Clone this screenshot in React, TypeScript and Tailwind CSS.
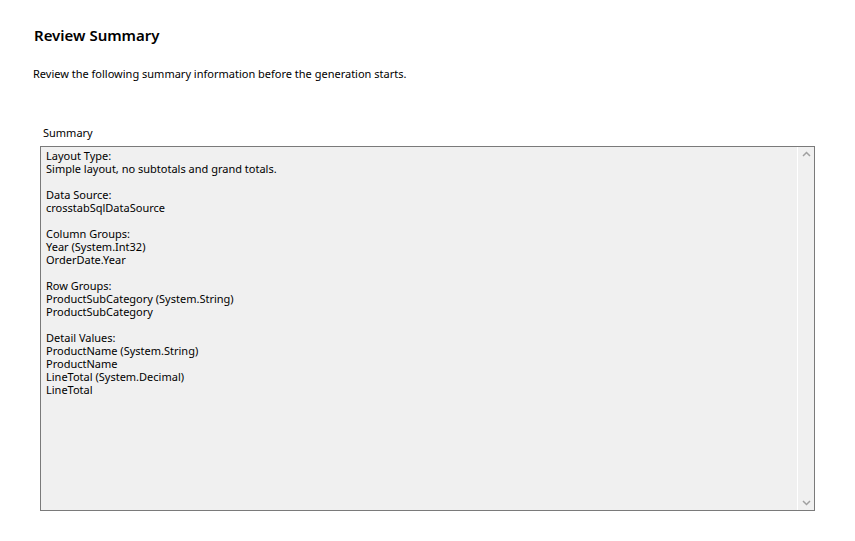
export default function App() {
  const lines = [
    'Layout Type:',
    'Simple layout, no subtotals and grand totals.',
    '',
    'Data Source:',
    'crosstabSqlDataSource',
    '',
    'Column Groups:',
    'Year (System.Int32)',
    'OrderDate.Year',
    '',
    'Row Groups:',
    'ProductSubCategory (System.String)',
    'ProductSubCategory',
    '',
    'Detail Values:',
    'ProductName (System.String)',
    'ProductName',
    'LineTotal (System.Decimal)',
    'LineTotal',
  ];

  return (
    <div
      className="h-[541px] w-[855px] bg-white text-black"
      style={{ fontFamily: '"Noto Sans", "Open Sans", sans-serif' }}
    >
      <div className="pl-[34px] pt-[24px]">
        <h1 className="h-[22px] text-[15px] font-semibold leading-[22px]">Review Summary</h1>
      </div>
      <p className="h-[16px] pl-[33px] mt-[20px] text-[11px] leading-[16px]">
        Review the following summary information before the generation starts.
      </p>
      <div className="h-[16px] pl-[43px] mt-[43px] text-[11px] leading-[16px]">Summary</div>
      <div className="ml-[40px] mt-[5px] flex h-[365px] w-[775px] border border-[#7a7a7a] bg-[#f0f0f0]">
        <div className="flex-1 pl-[5px] pt-[2px] text-[11px] leading-[13px]">
          {lines.map((line, i) => (
            <div key={i} className="h-[13px] whitespace-pre">
              {line}
            </div>
          ))}
        </div>
        <div className="flex w-[17px] flex-col items-center justify-between border-l border-white py-[4px]">
          <svg width="9" height="6" viewBox="0 0 9 6" fill="none">
            <path d="M1 5L4.5 1.5L8 5" stroke="#a0a0a0" strokeWidth="1.5" />
          </svg>
          <svg width="9" height="6" viewBox="0 0 9 6" fill="none">
            <path d="M1 1L4.5 4.5L8 1" stroke="#a0a0a0" strokeWidth="1.5" />
          </svg>
        </div>
      </div>
    </div>
  );
}
